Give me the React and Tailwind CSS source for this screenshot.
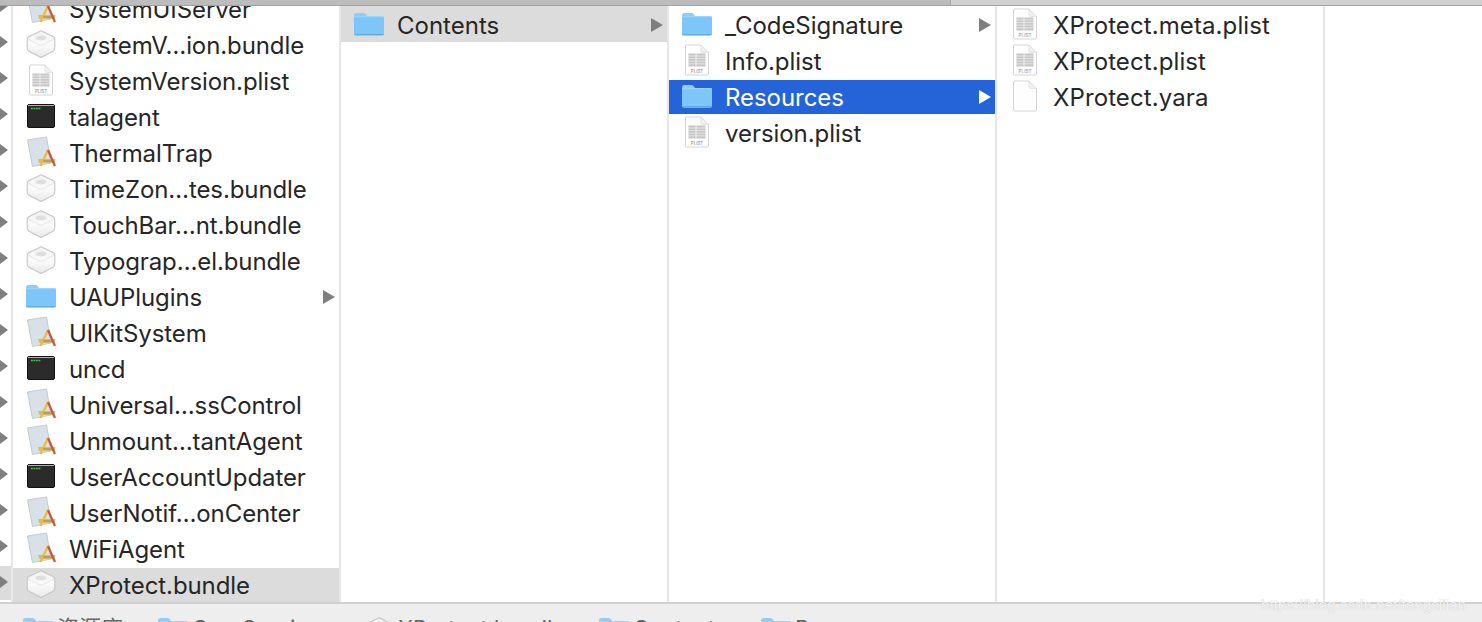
import React from "react";

const font = { fontFamily: "Inter, 'Noto Sans CJK SC', sans-serif" };

function Folder({ className = "" }) {
  return (
    <svg viewBox="0 0 32 24" className={`h-[24px] w-[32px] ${className}`}>
      <path d="M1 4 Q1 1 3.500 1 H10.500 Q12 1 13 2.500 L14 4 H29 Q31 4 31 6 V21.500 Q31 23.500 29 23.500 H3 Q1 23.500 1 21.500 Z" fill="#8fcdf8" />
      <path d="M1 6 Q1 4.600 3 4.600 H29 Q31 4.600 31 6 V21.500 Q31 23.500 29 23.500 H3 Q1 23.500 1 21.500 Z" fill="#7fc6f8" />
      <path d="M1 4.800 H31" stroke="#abdbfa" strokeWidth="0.8" />
      <path d="M1.300 22.600 H30.700" stroke="#62abe0" strokeWidth="1" />
    </svg>
  );
}

function PageShell({ children }) {
  return (
    <svg viewBox="0 0 26 32" className="h-[32px] w-[26px]">
      <path d="M1.500 2 Q1.500 1 2.500 1 H17 L24.500 8.500 V30 Q24.500 31 23.500 31 H2.500 Q1.500 31 1.500 30 Z" fill="#fefefe" stroke="#d4d4d4" strokeWidth="1" />
      <path d="M17 1 V7 Q17 8.500 18.500 8.500 H24.500 Z" fill="#f0f0f0" stroke="#dadada" strokeWidth="0.7" />
      {children}
    </svg>
  );
}

function Plist() {
  return (
    <PageShell>
      <rect x="4.500" y="9.500" width="17" height="13" fill="#c6c6c6" />
      <path d="M4.500 12 H21.500 M4.500 14.600 H21.500 M4.500 17.200 H21.500 M4.500 19.800 H21.500" stroke="#f4f4f4" strokeWidth="0.7" />
      <path d="M12 9.500 V22.500" stroke="#f4f4f4" strokeWidth="0.9" />
      <text x="13" y="28.500" textAnchor="middle" fontSize="4.600" fill="#8b8b8b" fontFamily="Inter, sans-serif">PLIST</text>
    </PageShell>
  );
}

function Blank() {
  return <PageShell />;
}

function Bundle() {
  return (
    <svg viewBox="0 0 30 28" className="h-[28px] w-[30px]">
      <defs>
        <linearGradient id="bundleFace" x1="0" y1="0" x2="0" y2="1">
          <stop offset="0" stopColor="#f1f1f1" />
          <stop offset="0.5" stopColor="#fbfbfb" />
          <stop offset="1" stopColor="#e9e9e9" />
        </linearGradient>
      </defs>
      <path d="M15 0.800 L27 6.500 Q28.800 7.500 28.800 10 V18 Q28.800 20.200 27 21.200 L15 27.600 L3 21.200 Q1.200 20.200 1.200 18 V10 Q1.200 7.500 3 6.500 Z" fill="url(#bundleFace)" stroke="#c6c6c6" strokeWidth="1.100" />
      <path d="M2 9 L15 15.500 L28 9" fill="none" stroke="#e6e6e6" strokeWidth="1" />
      <ellipse cx="15" cy="8" rx="5.500" ry="2.600" fill="#dedede" />
    </svg>
  );
}

function AppIcon() {
  return (
    <svg viewBox="0 0 30 32" className="h-[32px] w-[30px]">
      <path d="M1.500 4 L20.500 1 L25 27 L6.500 30.500 Z" fill="#d7e1e7" stroke="#c2cbd0" strokeWidth="1" />
      <path d="M12 23 H29.500 L28.500 27 H13 Z" fill="#d6b877" />
      <path d="M14.500 30 L22 14" stroke="#ecbc3a" strokeWidth="2.200" />
      <path d="M29 30 L22 14" stroke="#c9553e" strokeWidth="2.200" />
      <path d="M17 25 H27" stroke="#8f7a4a" strokeWidth="0.8" />
    </svg>
  );
}

function Terminal() {
  return (
    <svg viewBox="0 0 28 24" className="h-[24px] w-[28px]">
      <rect x="0.500" y="0.500" width="27" height="23" rx="1.500" fill="#2b2b2b" stroke="#111111" strokeWidth="1" />
      <rect x="1" y="1" width="26" height="1" fill="#a7b5ae" />
      <path d="M4 4.500 H14" stroke="#58c15a" strokeWidth="1.600" strokeDasharray="1.800 0.700" />
    </svg>
  );
}

const icons = { folder: Folder, plist: Plist, blank: Blank, bundle: Bundle, app: AppIcon, term: Terminal };

const firstColumn = [
  ["app", "SystemUIServer"],
  ["bundle", "SystemV…ion.bundle"],
  ["plist", "SystemVersion.plist"],
  ["term", "talagent"],
  ["app", "ThermalTrap"],
  ["bundle", "TimeZon…tes.bundle"],
  ["bundle", "TouchBar…nt.bundle"],
  ["bundle", "Typograp…el.bundle"],
  ["folder", "UAUPlugins", true],
  ["app", "UIKitSystem"],
  ["term", "uncd"],
  ["app", "Universal…ssControl"],
  ["app", "Unmount…tantAgent"],
  ["term", "UserAccountUpdater"],
  ["app", "UserNotif…onCenter"],
  ["app", "WiFiAgent"],
  ["bundle", "XProtect.bundle"],
];

function Arrow({ color = "#7f7f7f" }) {
  return (
    <svg viewBox="0 0 12 14" className="-mt-[3px] h-[14px] w-[12px]">
      <path d="M0 0 L12 7 L0 14 Z" fill={color} />
    </svg>
  );
}

function Row({ icon, label, arrow, state, first }) {
  const Icon = icons[icon];
  const rowClass =
    state === "active"
      ? "bg-[#2464d8] text-white"
      : state === "muted"
        ? "bg-[#dcdcdc] text-[#262626]"
        : "text-[#262626]";
  return (
    <div
      className={`mb-[2px] flex items-center pl-[12px] pr-[4px] text-[24px] leading-none ${rowClass} ${
        first ? "-mt-[2px] h-[36px] pt-[4px]" : "h-[34px] pt-[2px]"
      }`}
    >
      <span className="-mt-[4px] flex w-[32px] justify-center">
        <Icon />
      </span>
      <span className="ml-[12px] flex-1 whitespace-nowrap">{label}</span>
      {arrow && <Arrow color={state === "active" ? "#ffffff" : "#7f7f7f"} />}
    </div>
  );
}

function Column({ rows, className = "", listClass = "pt-[2px]" }) {
  return (
    <div className={`h-full w-[328px] shrink-0 overflow-hidden border-r-2 border-[#e6e6e6] ${className}`}>
      <div className={listClass}>
        {rows.map((r) => (
          <Row key={r.label} {...r} />
        ))}
      </div>
    </div>
  );
}

const crumbs = [
  ["folder", "资源库", "w-[135px]"],
  ["folder", "CoreServices", "w-[206px]"],
  ["bundle", "XProtect.bundle", "w-[235px]"],
  ["folder", "Contents", "w-[162px]"],
  ["folder", "Resources", "w-[160px]"],
];

export default function App() {
  return (
    <div className="relative flex h-[622px] w-[1482px] flex-col overflow-hidden bg-white" style={font}>
      {/* window top edge */}
      <div className="flex h-[6px] shrink-0 border-b border-[#a2a2a2]">
        <div className="w-[951px] border-r border-[#a8a8a8] bg-[#bcbcbc]" />
        <div className="flex-1 bg-[#d2d2d2]" />
      </div>

      <div className="flex h-[596px] shrink-0">
        {/* sliver of the previous column */}
        <div className="flex h-full w-[13px] shrink-0 flex-col overflow-hidden border-r-2 border-[#e6e6e6] bg-white">
          <div className="-mt-[16px]">
            {firstColumn.map((r, i) => (
              <div key={r[1]} className={`mb-[2px] flex h-[34px] items-center pb-[2px] ${i === 16 ? "bg-[#dcdcdc]" : ""}`}>
                <svg viewBox="0 0 8 12" className="h-[12px] w-[8px]">
                  <path d="M0 0 L8 6 L0 12 Z" fill="#7f7f7f" />
                </svg>
              </div>
            ))}
          </div>
        </div>

        <Column
          className="tracking-[-0.1px]"
          listClass="-mt-[14px]"
          rows={firstColumn.map((r, i) => ({
            icon: r[0],
            label: r[1],
            arrow: r[2],
            state: i === 16 ? "muted" : undefined,
          }))}
        />
        <Column rows={[{ icon: "folder", label: "Contents", arrow: true, state: "muted", first: true }]} />
        <Column
          className="tracking-[-0.05px]"
          rows={[
            { icon: "folder", label: "_CodeSignature", arrow: true },
            { icon: "plist", label: "Info.plist" },
            { icon: "folder", label: "Resources", arrow: true, state: "active" },
            { icon: "plist", label: "version.plist" },
          ]}
        />
        <Column
          className="tracking-[0.1px]"
          rows={[
            { icon: "plist", label: "XProtect.meta.plist" },
            { icon: "plist", label: "XProtect.plist" },
            { icon: "blank", label: "XProtect.yara" },
          ]}
        />
        <div className="flex-1" />
      </div>

      {/* path bar */}
      <div className="flex h-[20px] shrink-0 items-start overflow-hidden border-t-2 border-[#d0d0d0] bg-[#eeeeee] pl-[22px] pt-[13px] text-[22px] leading-none text-[#666666]">
        {crumbs.map(([icon, label, w]) => {
          const Icon = icons[icon];
          return (
            <div key={label} className={`flex shrink-0 items-start gap-[3px] ${w}`}>
              <span className="flex w-[32px] justify-center">
                <Icon />
              </span>
              <span className="whitespace-nowrap">{label}</span>
            </div>
          );
        })}
      </div>

      {/* watermark */}
      <span className="absolute left-[1261px] top-[597px] text-[15px] leading-none tracking-[0.1px] text-white/80 [font-family:'Liberation_Sans',sans-serif] [text-shadow:0_0_1px_#b8b8b8]">
        https://blog.csdn.net/tangsilian
      </span>
    </div>
  );
}
